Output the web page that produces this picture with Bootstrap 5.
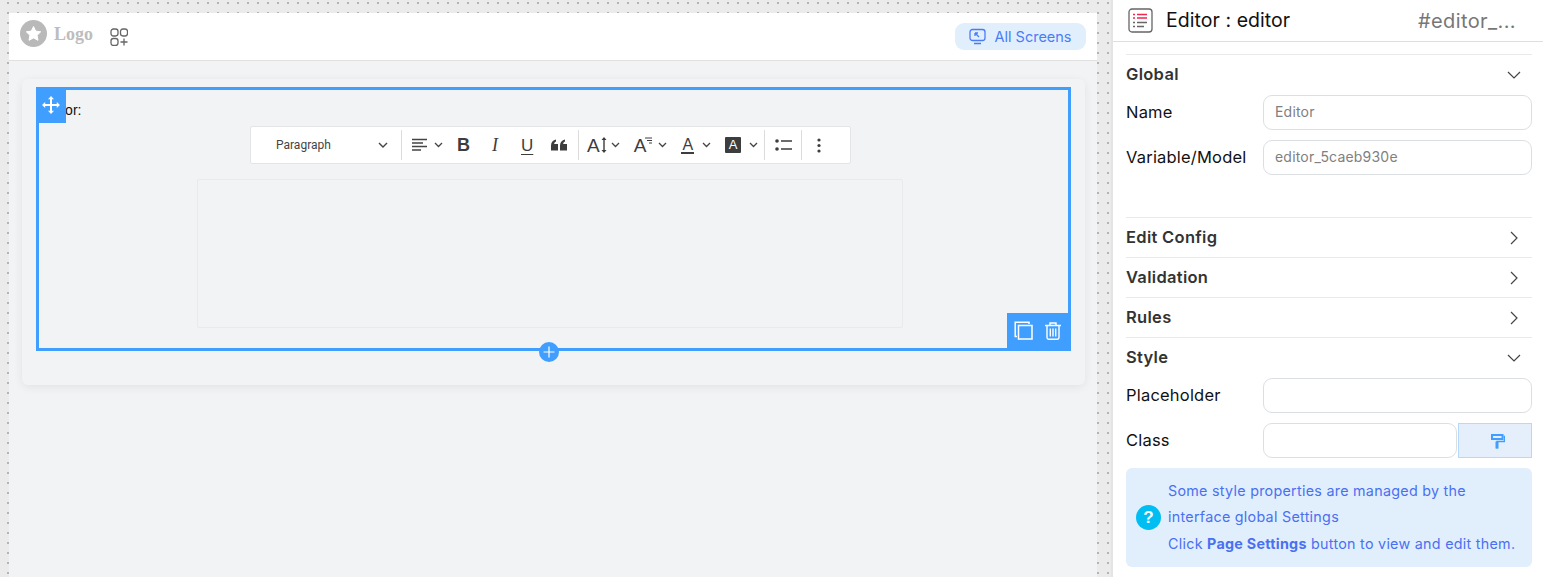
<!DOCTYPE html>
<html lang="en">
<head>
  <meta charset="UTF-8" />
  <meta name="viewport" content="width=device-width, initial-scale=1.0" />
  <title>Editor</title>
  <link href="https://cdn.jsdelivr.net/npm/bootstrap@5.3.3/dist/css/bootstrap.min.css" rel="stylesheet">
  <style>
    html, body { height: 100%; overflow: hidden; }
    body { font-family: Inter, "Noto Sans", sans-serif; color: #212529; background: #fff; }
    .shell { height: 577px; }

    /* left canvas */
    .canvas-area {
      width: 1111px; flex: none; height: 577px; padding: 13px 14px 0 9px;
      background-color: #ebebeb;
      background-image: radial-gradient(circle, #b4b4b4 1.1px, transparent 1.2px);
      background-size: 10px 10px; background-position: 3px -2px;
    }
    .screen-box { height: 564px; background: #f2f3f5; }
    .screen-head { height: 48px; background: #fff; border-bottom: 1px solid #e0e0e0; padding: 0 11px; }
    .logo-mark { margin-bottom: 7px; }
    .logo-word { font-family: "Liberation Serif", serif; font-weight: 700; font-size: 18px; color: #bdbdbd; margin: 0 0 4px 7px; }
    .add-icon { margin-left: 17px; }
    .all-screens { height: 27px; width: 131px; border-radius: 9px; background: #e1effc; color: #4a7cf7; font-size: 14.5px; }
    .page-card { margin: 18px 12px 0 13px; height: 306px; background: #f2f3f5; border-radius: 6px; box-shadow: 0 2px 10px rgba(0,0,0,.07); padding: 8px 14px 0; }
    .select-frame { position: relative; height: 264px; border: 3px solid #409eff; }
    .field-label { font-family: "Liberation Sans", sans-serif; font-size: 14px; color: #111; line-height: 20px; padding: 10px 0 0 2px; height: 36px; }
    .move-handle { position: absolute; left: -3px; top: -3px; width: 30px; height: 36px; background: #409eff; }
    .frame-tools { position: absolute; right: -3px; bottom: -3px; width: 64px; height: 38px; background: #409eff; gap: 12px; padding: 0 4px 3px 0; }
    .plus-btn { position: absolute; left: 500px; bottom: -14px; width: 20px; height: 20px; border-radius: 50%; background: #409eff; }

    .edit-toolbar { width: 601px; height: 38px; background: #fff; border: 1px solid #e4e5e7; border-radius: 2px; margin-left: 211px; color: #444; font-family: Roboto, sans-serif; }
    .para-pick { width: 150px; padding: 0 13px 0 25px; font-size: 12px; color: #444; }
    .tb-sep { width: 1px; height: 30px; background: #dcdcdc; flex: none; }
    .tb-item { height: 100%; }
    .tb-basic { width: 176px; padding-left: 9px; }
    .tb-type { width: 185px; padding-left: 8px; }
    .tb-list { width: 36px; }
    .tb-more { width: 33px; }
    .glyph { font-family: "Liberation Sans", sans-serif; color: #3d3d3d; line-height: 1; }
    .glyph-b { font-weight: 700; font-size: 18px; margin-left: 14px; }
    .glyph-i { font-family: "Liberation Serif", serif; font-style: italic; font-size: 18px; margin-left: 22px; }
    .glyph-u { font-size: 17px; text-decoration: underline; text-underline-offset: 3px; margin-left: 23px; }
    .glyph-a { font-size: 19px; }
    .glyph-au { font-size: 16px; border-bottom: 2px solid #3d3d3d; line-height: 15px; padding: 0 1px; margin-left: 14px; }
    .glyph-ab { font-size: 13px; line-height: 16px; width: 16px; flex: none; text-align: center; background: #3d3d3d; color: #fff; border-radius: 1px; margin-left: 14px; }
    .quote-icon { margin-left: 18px; }
    .tb-gap-s { margin-left: 4px; }
    .tb-gap-m { margin-left: 6px; }
    .tb-gap-l { margin-left: 8px; }
    .size-arrow { margin-left: 1px; }
    .a-second { margin-left: 14px; }
    .a-lines { margin: -8px 0 0 -1px; }
    .editor-box { width: 706px; height: 149px; margin: 15px 0 0 158px; border: 1px solid #e9eaec; border-radius: 2px; }

    /* right panel */
    .side-panel { width: 432px; flex: none; height: 577px; border-left: 2px solid #e4e4e4; background: #fff; }
    .side-head { height: 42px; border-bottom: 1px solid #dedede; padding: 0 27px 0 15px; }
    .side-title { font-size: 19.5px; color: #111; margin-left: 13px; letter-spacing: .05px; }
    .side-id { font-size: 20px; color: #777; margin-left: auto; letter-spacing: .4px; }
    .side-body { padding: 12px 11px 0 13px; }
    .sect-row { height: 40px; border-top: 1px solid #e9e9e9; padding-right: 11px; font-size: 16.5px; font-weight: 600; color: #333; letter-spacing: .3px; }
    .chev-right { margin-right: 3px; }
    .form-line { height: 35px; margin-bottom: 10px; font-size: 16.5px; color: #111; }
    .form-line label { width: 137px; flex: none; letter-spacing: .2px; }
    .line-first { margin-top: 1px; }
    .sect-gap { margin-top: 42px; }
    .side-input { height: 35px; border: 1px solid #dcdfe2; border-radius: 9px; font-size: 14px; color: #777; padding: 0 11px 2px; font-family: inherit; box-shadow: none; letter-spacing: .2px; }
    .side-input::placeholder { color: #808080; }
    .paint-btn { width: 74px; height: 35px; margin-left: 1px; background: #e4effb; border: 1px solid #b6d8fb; border-radius: 0; padding: 0 0 0 5px; }
    .info-box { height: 99px; background: #e1effc; border-radius: 6px; color: #4a70f2; font-size: 14.3px; line-height: 26.5px; padding: 10px 8px; letter-spacing: .28px; }
    .info-icon { width: 25px; height: 25px; border-radius: 50%; background: #00bdf2; color: #fff; font-weight: 700; font-size: 17px; line-height: 25px; text-align: center; margin: 0 7px 0 2px; font-family: "Liberation Sans", sans-serif; }
  </style>
</head>
<body>
  <div class="shell d-flex">
    <div class="canvas-area">
      <div class="screen-box">
        <div class="screen-head d-flex align-items-center">
          <svg class="logo-mark" width="27" height="27" viewBox="0 0 27 27"><circle cx="13.5" cy="13.5" r="13.5" fill="#b9b9b9"/><path d="M13.5 6.5l2.2 4.6 5 .7-3.6 3.500.9 5-4.500-2.400-4.500 2.400.9-5-3.600-3.500 5-.7z" fill="#fff" stroke="#fff" stroke-linejoin="round"/></svg>
          <span class="logo-word">Logo</span>
          <svg class="add-icon" width="18" height="18" viewBox="0 0 18 18" fill="none" stroke="#666" stroke-width="1.3"><rect x="1" y="1" width="7" height="7" rx="2.4"/><rect x="10.5" y="1" width="7" height="7" rx="2.4"/><rect x="1" y="10.5" width="7" height="7" rx="2.4"/><path d="M14 10.5v7M10.5 14h7"/></svg>
          <div class="all-screens d-flex align-items-center justify-content-center gap-2 ms-auto">
            <svg width="17" height="17" viewBox="0 0 17 17" fill="none" stroke="#4a7cf7" stroke-width="1.3"><rect x="1" y="1.5" width="15" height="11" rx="2.5"/><path d="M5 15.5h7M6 5l4 4M6 5v3M6 5h3"/></svg>
            <span>All Screens</span>
          </div>
        </div>
        <div class="page-card">
          <div class="select-frame">
            <div class="field-label">Editor:</div>
            <div class="edit-toolbar d-flex align-items-center">
              <div class="para-pick d-flex align-items-center justify-content-between">
                <span>Paragraph</span>
                <svg width="10" height="6" viewBox="0 0 10 6" fill="none" stroke="#444" stroke-width="1.4"><path d="M1 1l4 4 4-4"/></svg>
              </div>
              <span class="tb-sep"></span>
              <div class="tb-item tb-basic d-flex align-items-center">
                <svg width="17" height="14" viewBox="0 0 17 14" fill="none" stroke="#444" stroke-width="1.4"><path d="M1 1.500h15M1 5h11M1 8.500h15M1 12h9"/></svg>
                <svg class="tb-gap-m" width="9" height="6" viewBox="0 0 9 6" fill="none" stroke="#444" stroke-width="1.3"><path d="M1 1l3.500 3.500L8 1"/></svg>
                <span class="glyph glyph-b">B</span>
                <span class="glyph glyph-i">I</span>
                <span class="glyph glyph-u">U</span>
                <svg class="quote-icon" width="16" height="12" viewBox="0 0 16 12" fill="#3d3d3d"><path d="M0 6.500C0 3 2 1 5 .5v2C3.800 3 3.200 3.800 3.200 5H7v6.500H0zM9 6.500C9 3 11 1 14 .5v2c-1.200.5-1.800 1.300-1.800 2.500H16v6.500H9z"/></svg>
              </div>
              <span class="tb-sep"></span>
              <div class="tb-item tb-type d-flex align-items-center">
                <span class="glyph glyph-a">A</span>
                <svg class="size-arrow" width="6" height="16" viewBox="0 0 6 16" fill="#3d3d3d"><path d="M3 0l2.500 3H3.700v10H5.500L3 16 .5 13h1.800V3H.5z"/></svg>
                <svg class="tb-gap-s" width="9" height="6" viewBox="0 0 9 6" fill="none" stroke="#444" stroke-width="1.3"><path d="M1 1l3.500 3.500L8 1"/></svg>
                <span class="glyph glyph-a a-second">A</span>
                <svg class="a-lines" width="7" height="8" viewBox="0 0 7 8" fill="none" stroke="#3d3d3d"><path d="M0 1h7M2 3.500h5M4 6h3"/></svg>
                <svg class="tb-gap-m" width="9" height="6" viewBox="0 0 9 6" fill="none" stroke="#444" stroke-width="1.3"><path d="M1 1l3.500 3.500L8 1"/></svg>
                <span class="glyph glyph-au">A</span>
                <svg class="tb-gap-l" width="9" height="6" viewBox="0 0 9 6" fill="none" stroke="#444" stroke-width="1.3"><path d="M1 1l3.500 3.500L8 1"/></svg>
                <span class="glyph glyph-ab">A</span>
                <svg class="tb-gap-l" width="9" height="6" viewBox="0 0 9 6" fill="none" stroke="#444" stroke-width="1.3"><path d="M1 1l3.500 3.500L8 1"/></svg>
              </div>
              <span class="tb-sep"></span>
              <div class="tb-item tb-list d-flex align-items-center justify-content-center">
                <svg width="17" height="12" viewBox="0 0 17 12" fill="#3d3d3d"><circle cx="2" cy="2" r="1.800"/><circle cx="2" cy="10" r="1.800"/><path d="M6 1.300h11v1.400H6zM6 9.300h11v1.400H6z"/></svg>
              </div>
              <span class="tb-sep"></span>
              <div class="tb-item tb-more d-flex align-items-center justify-content-center">
                <svg width="4" height="15" viewBox="0 0 4 15" fill="#3d3d3d"><circle cx="2" cy="2" r="1.600"/><circle cx="2" cy="7.500" r="1.600"/><circle cx="2" cy="13" r="1.600"/></svg>
              </div>
            </div>
            <div class="editor-box"></div>
            <div class="move-handle d-flex align-items-center justify-content-center">
              <svg width="18" height="18" viewBox="0 0 18 18" fill="#fff"><path d="M9 0l3 3.200H10v4.800h4.800V6L18 9l-3.200 3v-2H10v4.800h2L9 18l-3-3.200h2V10H3.200v2L0 9l3.200-3v2H8V3.200H6z"/></svg>
            </div>
            <div class="frame-tools d-flex align-items-center justify-content-center">
              <svg width="19" height="19" viewBox="0 0 19 19" fill="none" stroke="#fff" stroke-width="1.500"><path d="M3 15.500H1.200V1.200H15V3"/><rect x="4.500" y="4.500" width="13.500" height="13.500"/></svg>
              <svg width="16" height="18" viewBox="0 0 16 18" fill="none" stroke="#fff" stroke-width="1.400"><path d="M0 3.500h16M5 3.300V1h6v2.300M2 3.500V15.500c0 1 .7 1.700 1.700 1.700h8.600c1 0 1.700-.7 1.700-1.700V3.500M5.300 6.500v8M8 6.500v8M10.700 6.500v8"/></svg>
            </div>
            <div class="plus-btn d-flex align-items-center justify-content-center">
              <svg width="12" height="12" viewBox="0 0 12 12" stroke="#fff" stroke-width="1.200"><path d="M6 .5v11M.5 6h11"/></svg>
            </div>
          </div>
        </div>
      </div>
    </div>

    <div class="side-panel">
      <div class="side-head d-flex align-items-center">
        <svg width="25" height="25" viewBox="0 0 25 25" fill="none"><rect x="1" y="1" width="23" height="23" rx="3" stroke="#666" stroke-width="1.300"/><path d="M5 6.500h2M9 6.500h10M5 10h2M9 10h10" stroke="#f5264f" stroke-width="1.500"/><path d="M5 14.500h2M9 14.500h10M5 18.500h2M9 18.500h7" stroke="#666" stroke-width="1.300"/></svg>
        <span class="side-title">Editor : editor</span>
        <span class="side-id">#editor_...</span>
      </div>
      <div class="side-body">
        <div class="sect-row d-flex align-items-center justify-content-between">
          <span>Global</span>
          <svg width="14" height="8" viewBox="0 0 14 8" fill="none" stroke="#444" stroke-width="1.200"><path d="M1 1l6 6 6-6"/></svg>
        </div>
        <div class="form-line line-first d-flex align-items-center">
          <label>Name</label>
          <input class="form-control side-input" type="text" placeholder="Editor">
        </div>
        <div class="form-line d-flex align-items-center">
          <label>Variable/Model</label>
          <input class="form-control side-input" type="text" placeholder="editor_5caeb930e">
        </div>
        <div class="sect-row sect-gap d-flex align-items-center justify-content-between">
          <span>Edit Config</span>
          <svg class="chev-right" width="8" height="14" viewBox="0 0 8 14" fill="none" stroke="#444" stroke-width="1.200"><path d="M1 1l6 6-6 6"/></svg>
        </div>
        <div class="sect-row d-flex align-items-center justify-content-between">
          <span>Validation</span>
          <svg class="chev-right" width="8" height="14" viewBox="0 0 8 14" fill="none" stroke="#444" stroke-width="1.200"><path d="M1 1l6 6-6 6"/></svg>
        </div>
        <div class="sect-row d-flex align-items-center justify-content-between">
          <span>Rules</span>
          <svg class="chev-right" width="8" height="14" viewBox="0 0 8 14" fill="none" stroke="#444" stroke-width="1.200"><path d="M1 1l6 6-6 6"/></svg>
        </div>
        <div class="sect-row d-flex align-items-center justify-content-between">
          <span>Style</span>
          <svg width="14" height="8" viewBox="0 0 14 8" fill="none" stroke="#444" stroke-width="1.200"><path d="M1 1l6 6 6-6"/></svg>
        </div>
        <div class="form-line line-first d-flex align-items-center">
          <label>Placeholder</label>
          <input class="form-control side-input" type="text">
        </div>
        <div class="form-line d-flex align-items-center">
          <label>Class</label>
          <input class="form-control side-input" type="text">
          <button type="button" class="btn paint-btn flex-shrink-0 d-flex align-items-center justify-content-center">
            <svg width="14" height="16" viewBox="0 0 14 16" fill="none"><path d="M1 2h10.500v4H1z" stroke="#409eff" stroke-width="2"/><path d="M12.500 3.500H13.500V8.500H6v7" stroke="#409eff" stroke-width="1.500"/><path d="M4.500 8.500h3v7h-3z" fill="#409eff"/></svg>
          </button>
        </div>
        <div class="info-box d-flex align-items-center">
          <span class="info-icon flex-shrink-0">?</span>
          <div>Some style properties are managed by the<br>interface global Settings<br>Click <strong>Page Settings</strong> button to view and edit them.</div>
        </div>
      </div>
    </div>
  </div>
  <script src="https://cdn.jsdelivr.net/npm/bootstrap@5.3.3/dist/js/bootstrap.bundle.min.js"></script>
</body>
</html>
